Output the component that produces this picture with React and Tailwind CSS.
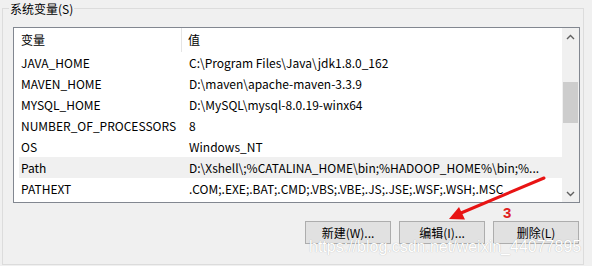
import React from "react";

const ROWS = [
  { name: "JAVA_HOME", value: "C:\\Program Files\\Java\\jdk1.8.0_162" },
  { name: "MAVEN_HOME", value: "D:\\maven\\apache-maven-3.3.9" },
  { name: "MYSQL_HOME", value: "D:\\MySQL\\mysql-8.0.19-winx64" },
  { name: "NUMBER_OF_PROCESSORS", value: "8" },
  { name: "OS", value: "Windows_NT" },
  {
    name: "Path",
    value: "D:\\Xshell\\;%CATALINA_HOME\\bin;%HADOOP_HOME%\\bin;%...",
    selected: true,
  },
  {
    name: "PATHEXT",
    value: ".COM;.EXE;.BAT;.CMD;.VBS;.VBE;.JS;.JSE;.WSF;.WSH;.MSC",
  },
];

const Chevron = ({ up }) => (
  <svg width="9" height="6" viewBox="0 0 9 6" className="text-[#606060]">
    <polyline
      points={up ? "1,5 4.5,1.5 8,5" : "1,1 4.5,4.5 8,1"}
      fill="none"
      stroke="currentColor"
      strokeWidth="1.4"
    />
  </svg>
);

const App = () => {
  return (
    <div className="relative w-[592px] h-[266px] overflow-hidden bg-[#f0f0f0] pt-[8px] text-black font-['Noto_Sans_CJK_SC',sans-serif] text-[12px] leading-[16px]">
      {/* Group box */}
      <div className="ml-[2px] w-[582px] h-[257px] border border-[#dcdcdc] pl-[10px] pr-[3px]">
        <div className="-mt-[9px] -ml-[4px] w-fit bg-[#f0f0f0] px-[1px] leading-[18px]">
          系统变量(S)
        </div>

        {/* List view */}
        <div className="mt-[9px] h-[176px] border border-[#828790] bg-white flex">
          <div className="flex-1 min-w-0 overflow-hidden">
            {/* Header */}
            <div className="flex h-[24px] items-center">
              <div className="w-[168px] pl-[7px] h-full flex items-center border-r border-[#e5e5e5]">
                变量
              </div>
              <div className="pl-[6px]">值</div>
            </div>

            {/* Rows */}
            {ROWS.map((r) => (
              <div
                key={r.name}
                className={`ml-[5px] flex h-[21px] items-center whitespace-nowrap ${
                  r.selected ? "bg-[#f0f0f0]" : ""
                }`}
              >
                <div className="w-[163px] shrink-0 pl-[2px]">{r.name}</div>
                <div className="pl-[7px]">{r.value}</div>
              </div>
            ))}
          </div>

          {/* Scrollbar */}
          <div className="w-[17px] shrink-0 bg-[#f0f0f0] flex flex-col">
            <div className="h-[17px] flex items-center justify-center">
              <Chevron up />
            </div>
            <div className="flex-1 px-[1px]">
              <div className="mt-[37px] h-[41px] bg-[#cdcdcd]" />
            </div>
            <div className="h-[17px] flex items-center justify-center">
              <Chevron />
            </div>
          </div>
        </div>

        {/* Buttons */}
        <div className="mt-[18px] mr-[1px] flex justify-end gap-[8px]">
          {["新建(W)...", "编辑(I)...", "删除(L)"].map((label) => (
            <button
              key={label}
              className="w-[86px] h-[23px] bg-[#e1e1e1] border border-[#adadad] text-[12px] leading-none"
            >
              {label}
            </button>
          ))}
        </div>
      </div>

      {/* Annotation arrow */}
      <svg
        className="absolute left-0 top-0 pointer-events-none"
        width="592"
        height="266"
      >
        <line
          x1="544"
          y1="178"
          x2="461"
          y2="213"
          stroke="#e81414"
          strokeWidth="3"
          strokeLinecap="round"
        />
        <polygon points="449,219 465,219.5 459,207" fill="#e81414" />
      </svg>
      <div className="absolute left-[503px] top-[205px] text-[15px] leading-[16px] font-bold text-[#e02020] font-['Liberation_Sans',sans-serif]">
        3
      </div>

      {/* Watermark */}
      <div className="absolute left-[309px] top-[238px] text-[16px] leading-[18px] text-white font-['Liberation_Sans',sans-serif] [text-shadow:0_0_1px_rgba(0,0,0,0.3)] pointer-events-none">
        https://blog.csdn.net/weixin_44077895
      </div>
    </div>
  );
};

export default App;
